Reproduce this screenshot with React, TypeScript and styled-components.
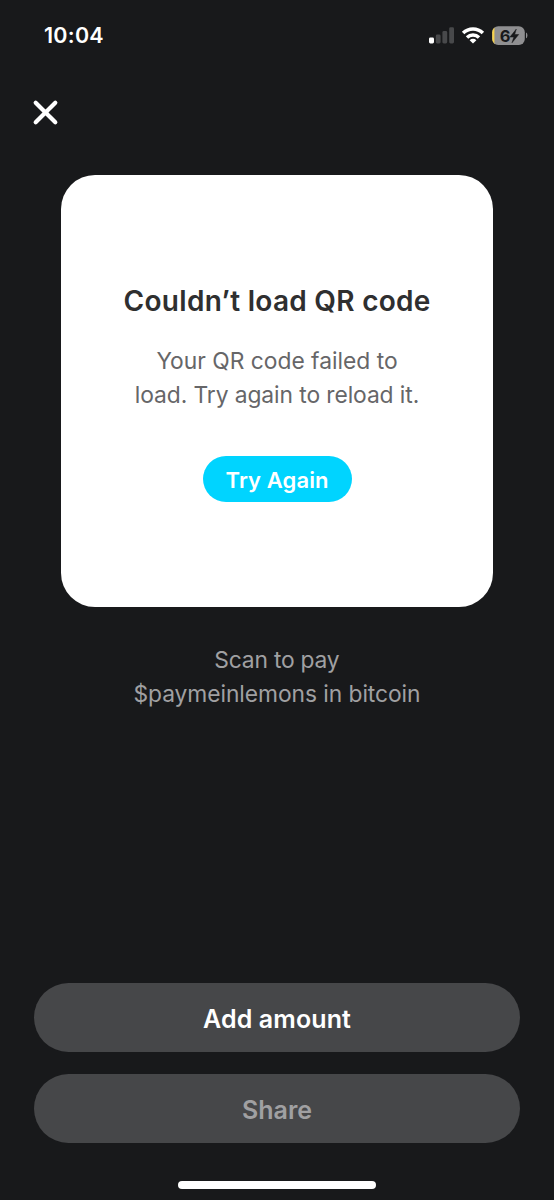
import React from "react";
import styled, { createGlobalStyle } from "styled-components";

const GlobalStyle = createGlobalStyle`
  *, *::before, *::after { box-sizing: border-box; }
  html, body { margin: 0; background: #18191b; }
  button { font: inherit; border: 0; padding: 0; cursor: pointer; }
`;

const Screen = styled.main`
  display: flex;
  flex-direction: column;
  align-items: center;
  width: 554px;
  height: 1200px;
  overflow: hidden;
  background: #18191b;
  font-family: Inter, "Liberation Sans", sans-serif;
`;

const StatusBar = styled.header`
  display: flex;
  align-items: center;
  justify-content: space-between;
  width: 100%;
  height: 72px;
  padding: 0 26px 0 44px;
  flex: none;
`;

const Clock = styled.span`
  color: #fff;
  font-size: 21.5px;
  font-weight: 600;
  line-height: 30px;
  letter-spacing: 0.25px;
  margin-top: -2px;
`;

const StatusIcons = styled.div`
  display: flex;
  align-items: center;
  height: 30px;
`;

const TopBar = styled.nav`
  display: flex;
  align-items: center;
  width: 100%;
  height: 80px;
  padding-left: 32px;
  flex: none;
`;

const CloseButton = styled.button`
  display: flex;
  background: none;
  color: #fff;
`;

const Card = styled.section`
  display: flex;
  flex-direction: column;
  align-items: center;
  width: 432px;
  height: 432px;
  margin-top: 23.3px;
  padding-top: 106px;
  border-radius: 34px;
  background: #fff;
  flex: none;
`;

const Line = styled.span<{ $spacing: number }>`
  display: block;
  white-space: nowrap;
  letter-spacing: ${(p) => p.$spacing}px;
  margin-right: ${(p) => -p.$spacing}px;
`;

const Title = styled.h1`
  margin: 0;
  color: #2f2f30;
  font-size: 28px;
  font-weight: 600;
  line-height: 40px;
`;

const Message = styled.p<{ $color: string; $top: number }>`
  display: flex;
  flex-direction: column;
  align-items: center;
  margin: ${(p) => p.$top}px 0 0;
  color: ${(p) => p.$color};
  font-size: 22.8px;
  line-height: 34px;
`;

const RetryButton = styled.button`
  display: flex;
  align-items: center;
  justify-content: center;
  width: 149px;
  height: 45.4px;
  margin-top: 44px;
  padding-top: 2px;
  border-radius: 23px;
  background: #00d4ff;
  color: #fff;
  font-size: 22px;
  font-weight: 600;
`;

const Actions = styled.footer`
  display: flex;
  flex-direction: column;
  gap: 22.4px;
  width: 486px;
  margin-top: auto;
`;

const ActionButton = styled.button<{ $muted?: boolean }>`
  display: flex;
  align-items: center;
  justify-content: center;
  height: 69px;
  padding-top: 3px;
  border-radius: 34.5px;
  background: #464749;
  color: ${(p) => (p.$muted ? "#a0a0a2" : "#fff")};
  font-size: 25px;
  font-weight: 600;
`;

const HomeIndicator = styled.div`
  width: 198px;
  height: 8px;
  margin: 38px 0 11px;
  border-radius: 4px;
  background: #fff;
  flex: none;
`;

const StatusGlyphs = () => (
  <svg width="100" height="30" viewBox="428 20.7 100 30" aria-hidden="true">
    <rect x="429" y="37.2" width="5" height="6" rx="1.4" fill="#fff" />
    <rect x="435.8" y="34.3" width="4.8" height="8.9" rx="1.4" fill="#48494b" />
    <rect x="442.4" y="30.8" width="4.8" height="12.4" rx="1.4" fill="#48494b" />
    <rect x="449.2" y="27" width="4.8" height="16.2" rx="1.4" fill="#48494b" />
    <g fill="none" stroke="#fff" strokeWidth="3.5">
      <path d="M463.1 32.7a14.2 14.2 0 0 1 19.8 0" />
      <path d="M467 37.1a8.7 8.7 0 0 1 12 0" />
    </g>
    <path d="M473 43.3l-3.4-3.4a4.9 4.9 0 0 1 6.8 0z" fill="#fff" />
    <clipPath id="cell">
      <rect x="492.2" y="25.9" width="32.6" height="18.7" rx="6" />
    </clipPath>
    <g clipPath="url(#cell)">
      <rect x="492" y="25" width="33" height="20" fill="#8f8f91" />
      <rect x="492" y="25" width="2.4" height="20" fill="#f8d24b" />
    </g>
    <path d="M526 32.2c1.9.6 1.9 5.2 0 5.8z" fill="#8f8f91" />
    <text x="499.8" y="41.4" fontSize="16.5" fontWeight="700" fill="#18191b">6</text>
    <path d="M516.3 28.8l-6.4 8h3.9l-1.8 5.7 6.7-8.3h-4z" fill="#18191b" stroke="#18191b" strokeWidth="0.5" strokeLinejoin="round" />
  </svg>
);

export default function App() {
  return (
    <>
      <GlobalStyle />
      <Screen>
        <StatusBar>
          <Clock>10:04</Clock>
          <StatusIcons>
            <StatusGlyphs />
          </StatusIcons>
        </StatusBar>
        <TopBar>
          <CloseButton aria-label="Close">
            <svg width="27" height="27" viewBox="0 0 27 27">
              <path d="M3.7 3.7l19.6 19.6M23.3 3.7L3.7 23.3" stroke="currentColor" strokeWidth="4.2" strokeLinecap="round" />
            </svg>
          </CloseButton>
        </TopBar>
        <Card>
          <Title>
            <Line $spacing={0.28}>Couldn’t load QR code</Line>
          </Title>
          <Message $color="#666668" $top={23}>
            <Line $spacing={0}>Your QR code failed to</Line>
            <Line $spacing={-0.08}>load. Try again to reload it.</Line>
          </Message>
          <RetryButton>
            <Line $spacing={0.1}>Try Again</Line>
          </RetryButton>
        </Card>
        <Message $color="#a0a0a2" $top={36}>
          <Line $spacing={-0.2}>Scan to pay</Line>
          <Line $spacing={-0.06}>$paymeinlemons in bitcoin</Line>
        </Message>
        <Actions>
          <ActionButton>
            <Line $spacing={0.12}>Add amount</Line>
          </ActionButton>
          <ActionButton $muted disabled>
            <Line $spacing={0}>Share</Line>
          </ActionButton>
        </Actions>
        <HomeIndicator />
      </Screen>
    </>
  );
}
